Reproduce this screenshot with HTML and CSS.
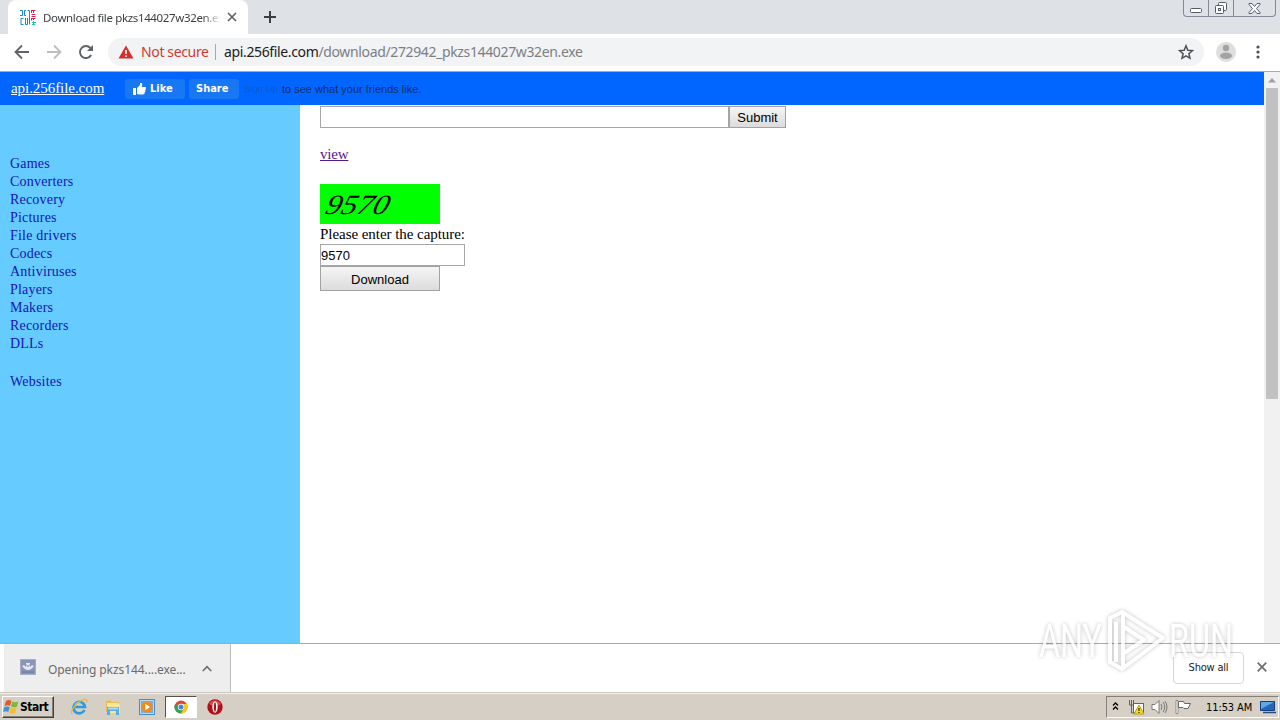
FILE: index.html
```html
<!DOCTYPE html>
<html lang="en">
<head>
    <meta charset="UTF-8">
    <title>Download file pkzs144027w32en.exe</title>
    <link rel="stylesheet" href="styles.css">
</head>
<body>
    <!-- tab strip -->
    <div class="tabstrip">
        <div class="tab">
            <svg class="favicon" width="17" height="17" viewBox="0 0 17 17" fill="none">
                <path d="M0 1.500h2.500v5H0M6 1.500H4.500v5H6M7.500 1.500h2v14M3.500 9.500H1v6h2.500M5.500 9v6.500h2V9" stroke="#1687d9"/>
                <path d="M11.500 1v3M11.500 1.500h4M13.500 1.500V4M11.500 5.500h4M11.500 7.500h4M11.500 9.500h4M11.500 9v2.500M13.500 9v2" stroke="#e0224e"/>
                <path d="M12 13.500h4M12 15.500h3M13.500 12v4" stroke="#25c9a0"/>
            </svg>
            <span class="tab-title">Download file pkzs144027w32en.exe</span>
            <svg class="tab-close" width="10" height="10" viewBox="0 0 10 10"><path d="M1 1l8 8M9 1l-8 8" stroke="#5f6368" stroke-width="1.7"/></svg>
        </div>
        <svg class="new-tab" width="12" height="12" viewBox="0 0 12 12"><path d="M6 0v12M0 6h12" stroke="#3c4043" stroke-width="2"/></svg>
        <div class="window-buttons">
            <span class="wb wb-min"><svg width="13" height="5" viewBox="0 0 13 5"><rect x=".5" y=".5" width="11" height="4" rx="1" fill="#fff" stroke="#565b66"/></svg></span>
            <span class="wb wb-max"><svg width="14" height="14" viewBox="0 0 14 14" fill="#fff" stroke="#565b66"><rect x="4.500" y="1.500" width="8" height="8" rx="1"/><rect x="1.500" y="4.500" width="8" height="8" rx="1"/><rect x="4.500" y="7.500" width="2" height="2"/></svg></span>
            <span class="wb wb-close"><svg width="13" height="11" viewBox="0 0 13 11"><path d="M1 .5h3l2.500 3 2.500-3h3v1L8.500 5.500l3.500 4v1H9l-2.500-3-2.500 3H1v-1l3.500-4L1 1.500z" fill="#fff" stroke="#565b66"/></svg></span>
        </div>
    </div>

    <!-- toolbar -->
    <div class="toolbar">
        <svg class="nav-icon" width="16" height="16" viewBox="0 0 16 16" fill="none" stroke="#5f6368" stroke-width="1.8"><path d="M15 8H2M8 1.500L1.500 8 8 14.500"/></svg>
        <svg class="nav-icon" width="16" height="16" viewBox="0 0 16 16" fill="none" stroke="#bbbdc0" stroke-width="1.8"><path d="M1 8h13M8 1.500L14.500 8 8 14.500"/></svg>
        <svg class="nav-icon" width="16" height="16" viewBox="0 0 16 16"><path d="M13.200 11A6 6 0 1 1 12.400 4L14 5.700" fill="none" stroke="#5f6368" stroke-width="1.9"/><path d="M15 1v6H9z" fill="#5f6368"/></svg>
        <div class="omnibox">
            <svg width="16" height="14" viewBox="0 0 16 14"><path d="M8 .5L15.500 13.500H.5z" fill="#d0312d"/><path d="M8 5v4M8 10.300v1.700" stroke="#fff" stroke-width="1.500"/></svg>
            <span class="not-secure">Not secure</span>
            <span class="divider"></span>
            <span class="url"><b>api.256file.com</b>/download/272942_pkzs144027w32en.exe</span>
            <svg class="star" width="16" height="16" viewBox="0 0 16 16"><path d="M8 1.800l1.800 4.400 4.700.4-3.600 3.100 1.100 4.600L8 11.900l-4 2.400 1.100-4.600-3.600-3.100 4.700-.4z" fill="none" stroke="#4d5156" stroke-width="1.500"/></svg>
        </div>
        <svg class="avatar" width="20" height="20" viewBox="0 0 20 20"><circle cx="10" cy="10" r="10" fill="#dedede"/><circle cx="10" cy="6" r="3.200" fill="#a3a3a3"/><ellipse cx="10" cy="13.700" rx="6" ry="3.200" fill="#a3a3a3"/></svg>
        <svg class="menu-dots" width="4" height="14" viewBox="0 0 4 14" fill="#4d5156"><circle cx="2" cy="2" r="1.600"/><circle cx="2" cy="7" r="1.600"/><circle cx="2" cy="12" r="1.600"/></svg>
    </div>

    <!-- page -->
    <div class="viewport">
        <div class="page">
            <div class="topbar">
                <a class="site" href="#">api.256file.com</a>
                <span class="fb-button fb-like"><svg width="13" height="12" viewBox="0 0 13 12" fill="#fff"><path d="M0 5h3v7H0zM4 5l3-3V0h1c1.500 0 1.500 2 .7 4H12c1.300 0 1.300 1.600.4 2 .7.700.4 1.600-.3 1.800.5.800 0 1.500-.6 1.700.4 1-.2 2-1.500 2H6L4 11z"/></svg>Like</span>
                <span class="fb-button fb-share">Share</span>
                <span class="signup">Sign Up</span>
                <span class="fb-text">to see what your friends like.</span>
            </div>
            <div class="columns">
                <div class="sidebar">
                    <a href="#">Games</a>
                    <a href="#">Converters</a>
                    <a href="#">Recovery</a>
                    <a href="#">Pictures</a>
                    <a href="#">File drivers</a>
                    <a href="#">Codecs</a>
                    <a href="#">Antiviruses</a>
                    <a href="#">Players</a>
                    <a href="#">Makers</a>
                    <a href="#">Recorders</a>
                    <a href="#">DLLs</a>
                    <a class="websites" href="#">Websites</a>
                </div>
                <div class="main">
                    <form class="search">
                        <input class="field search-field" type="text"><button class="button submit" type="button">Submit</button>
                    </form>
                    <a class="view" href="#">view</a>
                    <div class="captcha">
                        <svg width="120" height="40" viewBox="0 0 120 40"><text class="captcha-text" transform="translate(4 30) skewX(-16)" textLength="63" lengthAdjust="spacingAndGlyphs">9570</text></svg>
                    </div>
                    <div class="label">Please enter the capture:</div>
                    <input class="field captcha-field" type="text" value="9570">
                    <button class="button download" type="button">Download</button>
                </div>
            </div>
        </div>
        <div class="scrollbar">
            <svg width="16" height="16" viewBox="0 0 16 16"><path d="M4 10.500L8 6l4 4.500z" fill="#a0a0a0"/></svg>
            <div class="thumb"></div>
        </div>
    </div>

    <!-- download shelf -->
    <div class="shelf">
        <div class="shelf-item">
            <svg class="shelf-icon" width="16" height="16" viewBox="0 0 16 16"><rect x=".5" y=".5" width="15" height="15" fill="#8995b4" stroke="#a6aec4"/><path d="M2 7q6 8 12 0l-2-1-2 2V4H6v4L4 6z" fill="#e5e8f1"/><path d="M6 5.500l2 2 2-2" fill="none" stroke="#65759c"/><path d="M2 13h12" stroke="#6878a0"/></svg>
            <span class="shelf-name">Opening pkzs144....exe...</span>
            <svg class="chevron" width="10" height="7" viewBox="0 0 10 7"><path d="M.8 6L5 1.700 9.200 6" fill="none" stroke="#6b6e72" stroke-width="1.700"/></svg>
        </div>
        <span class="show-all">Show all</span>
        <svg class="shelf-close" width="10" height="10" viewBox="0 0 10 10"><path d="M.7.7l8.600 8.600M9.300.7L.7 9.300" stroke="#6b6e72" stroke-width="1.700"/></svg>
    </div>

    <!-- taskbar -->
    <div class="taskbar">
        <div class="start">
            <svg width="17" height="16" viewBox="0 0 17 16"><path d="M3 2q3-2 5.500 0L7 7Q4.500 5.500 1.500 7z" fill="#e9572b"/><path d="M9.500 2.600q3 1.500 6-.4L14 7.500q-3 1.700-6 0z" fill="#79b83e"/><path d="M1.200 8.200q3-1.400 5.500 0L5.200 13Q3 11.600 0 13z" fill="#3d8fd6"/><path d="M7.700 8.800q3 1.500 6-.2L12.200 14q-3 1.500-6-.3z" fill="#f7bc2c"/></svg>
            <span>Start</span>
        </div>
        <div class="launchers">
            <span class="launcher"><svg width="18" height="18" viewBox="0 0 18 18" fill="none"><path d="M14.500 12A5.800 5.800 0 1 1 15 9H5" stroke="#2d9bdf" stroke-width="2.600"/><path d="M5 7q1-3 4-3" stroke="#a4e1fa"/><path d="M2 16C-1 12 11 1 15.500 1.500q2 .5 1 3" stroke="#e8b937" stroke-width="1.300"/></svg></span>
            <span class="launcher"><svg width="18" height="18" viewBox="0 0 18 18"><path d="M2 3l4-1 2 2h7v10H2z" fill="#e4bd56"/><path d="M3 5h11l2 2v8H3z" fill="#f7e59b"/><path d="M3 9h12v8h-3v-4H6v4H3z" fill="#5baedb"/><path d="M4 9.500h10v2H4z" fill="#a8ddf2"/></svg></span>
            <span class="launcher"><svg width="18" height="18" viewBox="0 0 18 18"><rect x="1.500" y="1.500" width="15" height="15" fill="#b6d8f1" stroke="#4c8cc8"/><rect x="3" y="3" width="12" height="12" fill="#75b2dd"/><circle cx="9" cy="9" r="5.600" fill="#f38918"/><path d="M7.300 5.700v6.600L12 9z" fill="#fff"/></svg></span>
            <span class="launcher active"><svg width="14" height="14" viewBox="0 0 14 14"><circle cx="7" cy="7" r="6.500" fill="#e24435"/><path d="M7 7L1.200 4A6.500 6.500 0 0 0 6.800 13.500l3-4.700z" fill="#32a350"/><path d="M7 4h6a6.500 6.500 0 0 1-6.200 9.500L10 8.500z" fill="#fbc817"/><circle cx="7" cy="7" r="3.200" fill="#fff"/><circle cx="7" cy="7" r="2.500" fill="#4285e9"/></svg></span>
            <span class="launcher"><svg width="16" height="16" viewBox="0 0 16 16"><circle cx="8" cy="8" r="7.700" fill="#b01018"/><path d="M2 5a7 7 0 0 1 12 0q-6 4-12 0z" fill="#db4c50"/><ellipse cx="8" cy="8" rx="2.700" ry="5.700" fill="#fff"/><ellipse cx="8" cy="8" rx="1" ry="4.700" fill="#a40f17"/></svg></span>
        </div>
        <div class="tray">
            <svg class="tray-up" width="7" height="9" viewBox="0 0 7 9" fill="none" stroke="#000" stroke-width="1.300"><path d="M1 3.500l2.500-2.500L6 3.500M1 7.500L3.500 5 6 7.500"/></svg>
            <svg class="tray-net" width="17" height="16" viewBox="0 0 17 16"><rect x="5.500" y="4.500" width="10" height="9" fill="#fff" stroke="#646464"/><path d="M1.500 1v5h4V1M3.500 1v13H7" fill="none" stroke="#636363"/><path d="M11 6l5 9H6z" fill="#f7dc1c" stroke="#b8a014"/><path d="M11 9v3M11 13v1" stroke="#000"/></svg>
            <svg class="tray-sound" width="17" height="16" viewBox="0 0 17 16" fill="none" stroke="#777"><path d="M1 5.500h3l4-4v13l-4-4H1z" fill="#fff"/><path d="M10 5q2 3 0 6M12 3q3.500 5 0 10M14 2q4 6 0 12"/></svg>
            <svg class="tray-flag" width="17" height="16" viewBox="0 0 17 16"><path d="M1 1.500h2v13H1z" fill="#fff" stroke="#777" stroke-width=".8"/><path d="M3.500 2.500h5l1 2h6L13 9.500H9l-1-1H3.500z" fill="#fff" stroke="#666"/></svg>
            <span class="clock">11:53 AM</span>
            <svg class="tray-desktop" width="16" height="14" viewBox="0 0 16 14"><path d="M.5 1.500h14v9H.5z" fill="#2566b7" stroke="#163d7b"/><path d="M1 2h13L1 9z" fill="#62a7e7"/><path d="M3 12.500h13" stroke="#244b81" stroke-width="1.500"/></svg>
        </div>
    </div>

    <!-- watermark -->
    <svg class="watermark" width="210" height="80" viewBox="0 0 210 80">
        <text x="9" y="57" textLength="63" lengthAdjust="spacingAndGlyphs">ANY</text>
        <g class="watermark-logo">
            <path d="M80 18l12-6 41 26-41 31-12-7zM86 22v40M93 14v53M94 27l20 13-20 13"/>
        </g>
        <text x="139" y="57" textLength="64" lengthAdjust="spacingAndGlyphs">RUN</text>
    </svg>
</body>
</html>
```

FILE: styles.css
```css
* {
    box-sizing: border-box;
}
body {
    margin: 0;
    width: 1280px;
    height: 720px;
    display: flex;
    flex-direction: column;
    overflow: hidden;
    position: relative;
    background: #fff;
    font-family: "DejaVu Sans Condensed", "DejaVu Sans", sans-serif;
}
svg {
    display: block;
    flex: none;
}
span {
    white-space: nowrap;
}

/* tab strip */
.tabstrip {
    height: 34px;
    flex: none;
    display: flex;
    background: #dee1e6;
    padding-left: 8px;
}
.tab {
    width: 240px;
    display: flex;
    align-items: center;
    padding: 0 11px 0 12px;
    background: #fff;
    border-radius: 8px 8px 0 0;
}
.tab-title {
    width: 178px;
    margin-left: 6px;
    overflow: hidden;
    font-family: "Noto Sans", sans-serif;
    font-size: 11.5px;
    letter-spacing: -0.35px;
    color: #3c4043;
    -webkit-mask-image: linear-gradient(90deg, #000 90%, transparent);
    mask-image: linear-gradient(90deg, #000 90%, transparent);
}
.tab-close {
    margin-left: 6px;
}
.new-tab {
    margin: 11px 0 0 16px;
}
.window-buttons {
    display: flex;
    width: 93px;
    height: 17px;
    margin: 0 4px 0 auto;
    border: 1px solid #858995;
    border-top: 0;
    border-radius: 0 0 4px 4px;
}
.wb {
    display: flex;
    align-items: center;
    justify-content: center;
    width: 25px;
    border-right: 1px solid #858995;
}
.wb-min {
    padding-top: 4px;
}
.wb-close {
    flex: 1;
    border-right: 0;
}

/* toolbar */
.toolbar {
    height: 38px;
    flex: none;
    display: flex;
    align-items: center;
    padding: 0 20px 2px 14px;
    border-bottom: 1px solid #a9abae;
    background: #fff;
}
.nav-icon {
    margin-right: 16px;
}
.omnibox {
    width: 1096px;
    height: 28px;
    margin-left: -2px;
    display: flex;
    align-items: center;
    padding: 0 10px;
    border-radius: 14px;
    background: #f1f3f4;
    font-family: "Noto Sans", sans-serif;
    font-size: 14px;
    letter-spacing: -0.36px;
}
.not-secure {
    margin-left: 7px;
    width: 68px;
    color: #cf3a35;
}
.divider {
    width: 1px;
    height: 16px;
    margin: 0 8px 0 6px;
    background: #a5a8ac;
}
.url {
    color: #7b7f84;
}
.url b {
    font-weight: normal;
    color: #202124;
}
.star {
    margin-left: auto;
}
.avatar {
    margin-left: 12px;
}
.menu-dots {
    margin-left: auto;
}

/* page */
.viewport {
    height: 571px;
    flex: none;
    display: flex;
}
.page {
    width: 1264px;
    display: flex;
    flex-direction: column;
    font-family: "Liberation Serif", serif;
    font-size: 14px;
}
.topbar {
    height: 33px;
    display: flex;
    align-items: center;
    padding-left: 11px;
    background: #06f;
    font-family: "Liberation Sans", sans-serif;
}
.site {
    width: 114px;
    color: #fff;
    font-family: "Liberation Serif", serif;
    font-size: 15px;
    letter-spacing: -0.06px;
}
.fb-button {
    display: flex;
    align-items: center;
    height: 20px;
    border-radius: 3px;
    background: #1877f2;
    color: #fff;
    font-family: "DejaVu Sans Condensed", "DejaVu Sans", sans-serif;
    font-weight: bold;
    font-size: 11px;
}
.fb-like {
    width: 60px;
    padding-left: 8px;
    gap: 4px;
}
.fb-share {
    width: 50px;
    margin: 0 5px 0 4px;
    padding-left: 7px;
}
.fb-text {
    margin-left: 3px;
    color: #16305f;
    font-size: 11px;
}
.signup {
    width: 35px;
    color: #1558c9;
    font-size: 9.5px;
}
.columns {
    flex: 1;
    display: flex;
}
.sidebar {
    width: 300px;
    display: flex;
    flex-direction: column;
    padding: 50px 10px 0;
    background: #6cf;
}
.sidebar a {
    height: 18px;
    line-height: 18px;
    color: #1414b4;
    text-decoration: none;
    letter-spacing: 0.2px;
}
.sidebar .websites {
    margin-top: 20px;
}
.main {
    display: flex;
    flex-direction: column;
    align-items: flex-start;
    padding: 1px 0 0 20px;
}
.search {
    display: flex;
}
.field {
    height: 22px;
    padding: 0;
    border: 1px solid #a6a6a6;
    font-family: "Liberation Sans", sans-serif;
    font-size: 13px;
}
.search-field {
    width: 409px;
}
.button {
    padding: 0;
    border: 1px solid #a2a2a2;
    border-radius: 0;
    background: linear-gradient(#f5f5f5, #dcdcdc);
    color: #000;
    font-family: "Liberation Sans", sans-serif;
    font-size: 13px;
}
.submit {
    width: 57px;
    height: 22px;
}
.view {
    height: 18px;
    line-height: 18px;
    margin: 17px 0 21px;
    color: #551a8b;
    font-size: 15px;
    letter-spacing: -0.2px;
}
.captcha {
    width: 120px;
    height: 40px;
    background: #0f0;
}
.captcha-text {
    font-family: "Liberation Serif", serif;
    font-style: italic;
    font-size: 28px;
}
.label {
    height: 20px;
    line-height: 20px;
    font-size: 15px;
    letter-spacing: -0.05px;
}
.captcha-field {
    width: 145px;
}
.download {
    width: 120px;
    height: 25px;
    padding-top: 1px;
}
.scrollbar {
    width: 16px;
    background: #f1f1f1;
}
.thumb {
    width: 12px;
    height: 311px;
    margin-left: 2px;
    background: #c1c1c1;
}

/* download shelf */
.shelf {
    height: 50px;
    flex: none;
    display: flex;
    align-items: center;
    padding: 0 13px 1px 4px;
    border-top: 1px solid #a9a9a9;
    background: #fff;
}
.shelf-item {
    width: 227px;
    height: 48px;
    display: flex;
    align-items: center;
    padding-left: 16px;
    border-right: 1px solid #bdbdbd;
    background: #eee;
}
.shelf-icon {
    margin-bottom: 2px;
}
.shelf-name {
    width: 138px;
    margin: 3px 0 0 12px;
    font-family: "Noto Sans", sans-serif;
    font-size: 12px;
    letter-spacing: -0.08px;
    color: #6a6a6a;
}
.chevron {
    margin-left: 16px;
}
.show-all {
    width: 71px;
    height: 32px;
    margin: -1px 0 0 auto;
    border: 1px solid #d4d6d9;
    border-radius: 4px;
    color: #222;
    font-size: 11px;
    letter-spacing: -0.2px;
    line-height: 30px;
    text-align: center;
}
.shelf-close {
    margin: -2px 0 0 13px;
}

/* taskbar */
.taskbar {
    height: 27px;
    flex: none;
    display: flex;
    align-items: center;
    border-top: 1px solid #f4f2ed;
    box-shadow: 0 -1px #c9c6c0;
    background: #d6cfc5;
}
.start {
    width: 52px;
    height: 22px;
    display: flex;
    align-items: center;
    margin-left: 2px;
    border: 1px solid #fff;
    border-right-color: #404040;
    border-bottom-color: #404040;
    box-shadow: inset -1px -1px #858078;
    padding-left: 0;
    color: #000;
    font-size: 12px;
    font-weight: bold;
    letter-spacing: -0.5px;
}
.launchers {
    display: flex;
    margin-left: 8px;
}
.launcher {
    width: 34px;
    height: 22px;
    display: flex;
    align-items: center;
    justify-content: center;
}
.launcher.active {
    width: 32px;
    margin: 0 1px;
    border: 1px solid #fff;
    border-top-color: #55524e;
    border-left-color: #55524e;
    background: #fff;
}
.tray {
    width: 173px;
    height: 22px;
    margin: 0 1px 0 auto;
    display: flex;
    align-items: center;
    padding-left: 5px;
    border: 1px solid #fff;
    border-top-color: #858078;
    border-left-color: #858078;
}
.tray-up {
    margin-bottom: 2px;
}
.tray-net {
    margin-left: 9px;
}
.tray-sound {
    margin-left: 6px;
}
.tray-flag {
    margin-left: 7px;
}
.clock {
    width: 47px;
    margin-left: 14px;
    font-size: 11px;
    letter-spacing: -0.1px;
}
.tray-desktop {
    margin-left: 7px;
}

/* watermark */
.watermark {
    position: absolute;
    left: 1030px;
    top: 600px;
    filter: drop-shadow(0 0 2px rgba(0, 0, 0, 0.3));
    opacity: 0.8;
}
.watermark text {
    font-family: Roboto, sans-serif;
    font-size: 47px;
    fill: #fff;
}
.watermark-logo {
    fill: none;
    stroke: #fff;
    stroke-width: 4;
    stroke-linejoin: round;
}
```
